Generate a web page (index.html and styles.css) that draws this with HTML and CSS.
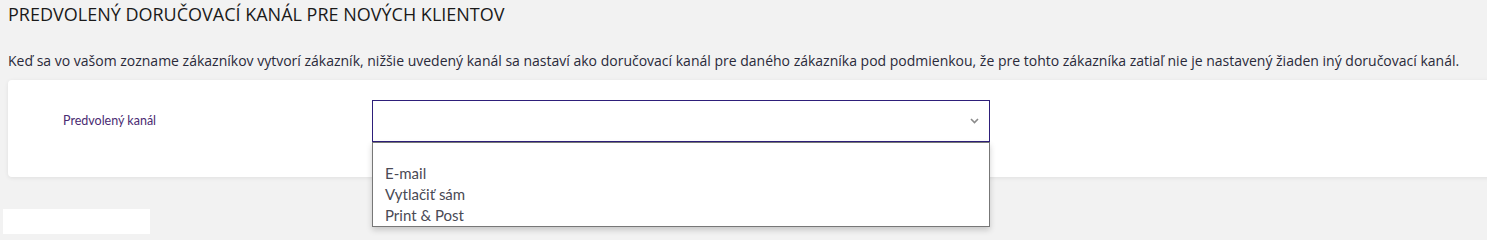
FILE: index.html
```html
<!DOCTYPE html>
<html lang="sk">
<head>
<meta charset="utf-8">
<link rel="stylesheet" href="styles.css">
</head>
<body>
<h1 class="title">PREDVOLENÝ DORUČOVACÍ KANÁL PRE NOVÝCH KLIENTOV</h1>
<p class="desc">Keď sa vo vašom zozname zákazníkov vytvorí zákazník, nižšie uvedený kanál sa nastaví ako doručovací kanál pre daného zákazníka pod podmienkou, že pre tohto zákazníka zatiaľ nie je nastavený žiaden iný doručovací kanál.</p>
<div class="card">
  <label class="label">Predvolený kanál</label>
  <div class="select-wrap">
    <div class="select">
      <svg class="chev" width="9" height="6" viewBox="0 0 9 6"><path d="M1 1 L4.5 4.5 L8 1" fill="none" stroke="#8a8a8a" stroke-width="1.6"/></svg>
    </div>
    <ul class="menu">
      <li>E-mail</li>
      <li>Vytlačiť sám</li>
      <li>Print &amp; Post</li>
    </ul>
  </div>
</div>
<div class="blank"></div>
</body>
</html>
```
FILE: styles.css
```css
html, body {
  margin: 0;
  padding: 0;
  background: #f2f2f2;
  height: 240px;
  overflow: hidden;
}
body {
  font-family: "Open Sans", "Liberation Sans", sans-serif;
  color: #222;
}
.title {
  margin: 0;
  padding: 2px 0 0 8px;
  font-size: 18px;
  font-weight: 400;
  line-height: 24px;
  color: #1a1a1a;
}
.desc {
  margin: 0;
  padding: 25px 0 0 8px;
  font-size: 14px;
  line-height: 19px;
  color: #2a2a3a;
  white-space: nowrap;
}
.card {
  margin: 10px 0 0 8px;
  width: 1500px;
  height: 97px;
  background: #fff;
  border-radius: 4px;
  box-shadow: 0 1px 4px rgba(0,0,0,0.08);
  display: flex;
  align-items: flex-start;
  box-sizing: border-box;
  padding: 20px 0 0 55px;
}
.label {
  font-family: "Lato", "Noto Sans", sans-serif;
  font-size: 12.5px;
  color: #4a2b72;
  width: 309px;
  line-height: 42px;
  flex: none;
}
.select-wrap {
  position: relative;
  width: 618px;
}
.select {
  height: 42px;
  box-sizing: border-box;
  border: 1px solid #2e1f7a;
  background: #fff;
  display: flex;
  align-items: center;
  justify-content: flex-end;
  padding-right: 10px;
}
.chev { display: block; }
.menu {
  position: absolute;
  left: 0;
  top: 42px;
  width: 618px;
  height: 85px;
  box-sizing: border-box;
  margin: 0;
  list-style: none;
  padding: 20px 0 0 12px;
  background: #fff;
  border: 1px solid #777;
  box-shadow: 0 3px 6px rgba(0,0,0,0.18);
  font-family: "Lato", "Noto Sans", sans-serif;
  font-size: 15px;
  line-height: 21px;
  color: #4a4a55;
  z-index: 2;
}
.blank {
  margin: 32px 0 0 3px;
  width: 147px;
  height: 25px;
  background: #fff;
}
```
